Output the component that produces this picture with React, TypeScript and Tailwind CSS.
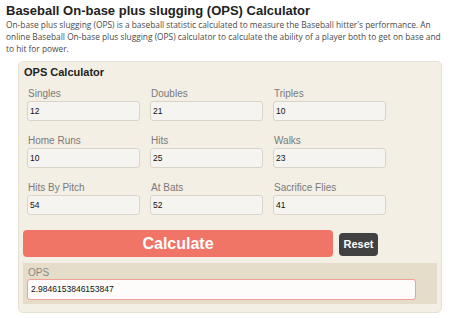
const fields = [
  { label: "Singles", value: "12" },
  { label: "Doubles", value: "21" },
  { label: "Triples", value: "10" },
  { label: "Home Runs", value: "10" },
  { label: "Hits", value: "25" },
  { label: "Walks", value: "23" },
  { label: "Hits By Pitch", value: "54" },
  { label: "At Bats", value: "52" },
  { label: "Sacrifice Flies", value: "41" },
];

const App = () => {
  return (
    <div className="w-[450px] h-[318px] bg-white pl-[6px] pt-[3px] overflow-hidden">
      <h1 className="font-['Liberation_Sans',Arial,sans-serif] text-[13px] font-bold leading-[16px] text-[#222]">
        Baseball On-base plus slugging (OPS) Calculator
      </h1>
      <p className="whitespace-nowrap font-['Open_Sans',sans-serif] text-[8.35px] leading-[12px] text-[#4a4a4a] mt-0">
        On-base plus slugging (OPS) is a baseball statistic calculated to measure the Baseball hitter's performance. An
        <br />
        online Baseball On-base plus slugging (OPS) calculator to calculate the ability of a player both to get on base and
        <br />
        to hit for power.
      </p>

      <div className="ml-[12px] mt-[6px] w-[424px] h-[252px] bg-[#f3efe4] border border-[#e7e1d3] rounded-[5px] px-[4px] font-['Liberation_Sans',Arial,sans-serif]">
        <div className="text-[11px] font-bold leading-[20px] text-[#222] pl-[1px]">OPS Calculator</div>

        <div className="grid grid-cols-[113px_113px_113px] gap-x-[10px] gap-y-[13px] mt-[5px] pl-[4px]">
          {fields.map((f) => (
            <div key={f.label}>
              <div className="text-[10px] leading-[14px] text-[#7a7a7a] pl-[1px]">{f.label}</div>
              <div className="h-[20px] border border-[#d9d4c9] rounded-[3px] bg-[#f6f4f0] flex items-center px-[2px] text-[8.5px] text-[#111]">
                {f.value}
              </div>
            </div>
          ))}
        </div>

        <div className="flex items-center gap-[6px] mt-[15px]">
          <button
            type="button"
            className="w-[310px] h-[27px] bg-[#f17567] rounded-[4px] text-white text-[16px] font-bold"
          >
            Calculate
          </button>
          <button
            type="button"
            className="w-[39px] h-[23px] mt-[2px] bg-[#414141] rounded-[4px] text-white text-[11px] font-bold"
          >
            Reset
          </button>
        </div>

        <div className="mt-[6px] h-[41px] bg-[#e5ddca] pl-[4px] pr-[21px] pt-[3px]">
          <div className="text-[10px] leading-[13px] text-[#8a8a8a] pl-[1px]">OPS</div>
          <div className="h-[21px] border border-[#f0a096] rounded-[3px] bg-[#fdfcfa] flex items-center px-[3px] text-[8.5px] text-[#111]">
            2.9846153846153847
          </div>
        </div>
      </div>
    </div>
  );
};

export default App;
